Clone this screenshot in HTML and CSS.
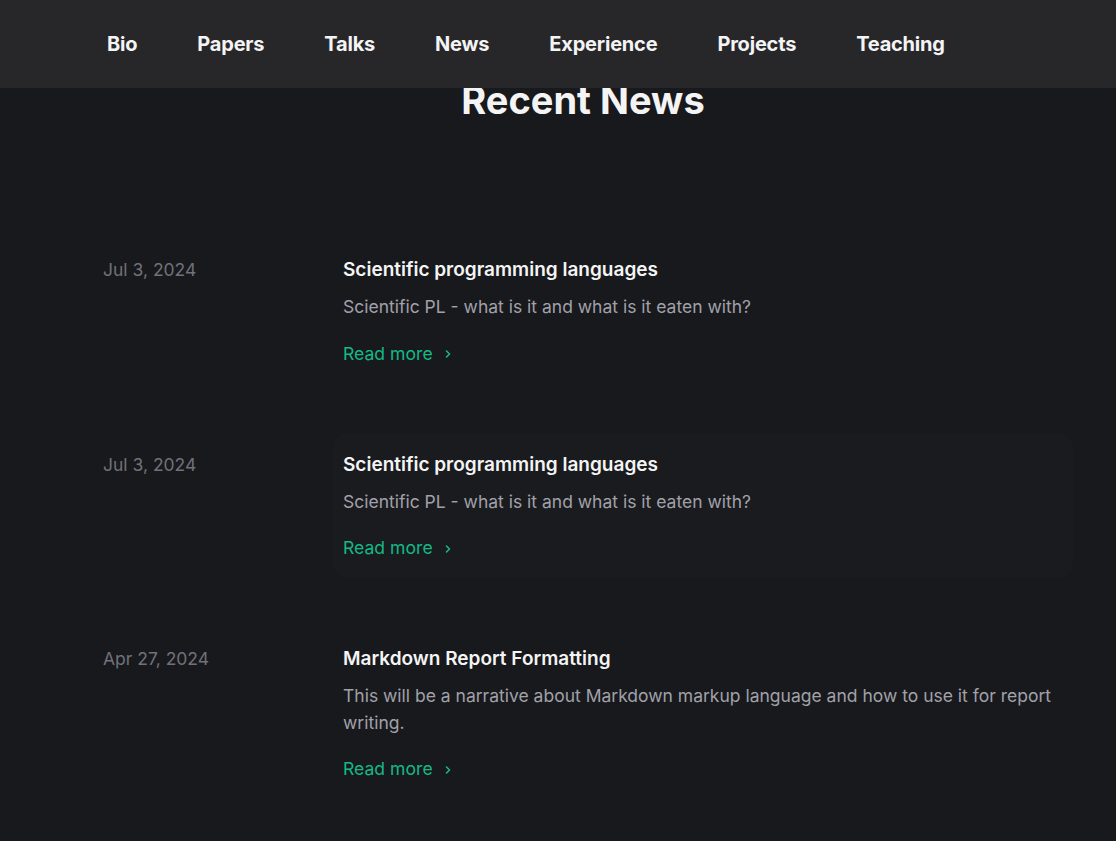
FILE: index.html
```html
<!DOCTYPE html>
<html lang="en">
<head>
<meta charset="utf-8">
<title>Recent News</title>
<link rel="stylesheet" href="styles.css">
</head>
<body>
<header class="topbar">
  <nav class="nav">
    <a class="nav-link" href="#">Bio</a>
    <a class="nav-link" href="#">Papers</a>
    <a class="nav-link" href="#">Talks</a>
    <a class="nav-link" href="#">News</a>
    <a class="nav-link" href="#">Experience</a>
    <a class="nav-link" href="#">Projects</a>
    <a class="nav-link" href="#">Teaching</a>
  </nav>
</header>
<main class="page">
  <h1 class="page-title">Recent News</h1>
  <section class="news-list">
    <article class="news-item">
      <time class="news-date">Jul 3, 2024</time>
      <div class="news-card">
        <h2 class="news-title">Scientific programming languages</h2>
        <p class="news-desc">Scientific PL - what is it and what is it eaten with?</p>
        <a class="read-more" href="#">Read more <svg class="chev" width="8" height="10" viewBox="0 0 8 10"><path d="M2.5 2 L5.5 5 L2.5 8" fill="none" stroke="currentColor" stroke-width="1.6" stroke-linecap="round" stroke-linejoin="round"/></svg></a>
      </div>
    </article>
    <article class="news-item">
      <time class="news-date">Jul 3, 2024</time>
      <div class="news-card news-card-hover">
        <h2 class="news-title">Scientific programming languages</h2>
        <p class="news-desc">Scientific PL - what is it and what is it eaten with?</p>
        <a class="read-more" href="#">Read more <svg class="chev" width="8" height="10" viewBox="0 0 8 10"><path d="M2.5 2 L5.5 5 L2.5 8" fill="none" stroke="currentColor" stroke-width="1.6" stroke-linecap="round" stroke-linejoin="round"/></svg></a>
      </div>
    </article>
    <article class="news-item">
      <time class="news-date">Apr 27, 2024</time>
      <div class="news-card">
        <h2 class="news-title">Markdown Report Formatting</h2>
        <p class="news-desc">This will be a narrative about Markdown markup language and how to use it for report writing.</p>
        <a class="read-more" href="#">Read more <svg class="chev" width="8" height="10" viewBox="0 0 8 10"><path d="M2.5 2 L5.5 5 L2.5 8" fill="none" stroke="currentColor" stroke-width="1.6" stroke-linecap="round" stroke-linejoin="round"/></svg></a>
      </div>
    </article>
  </section>
</main>
</body>
</html>
```
FILE: styles.css
```css
* { box-sizing: border-box; }
html, body { margin: 0; padding: 0; }
body {
  background: #18191c;
  font-family: Inter, "Noto Sans", sans-serif;
  color: #f4f4f5;
  overflow: hidden;
}
.topbar {
  position: fixed;
  top: 0; left: 0; right: 0;
  height: 88px;
  background: #27272a;
  z-index: 10;
}
.nav {
  display: flex;
  align-items: center;
  gap: 60px;
  height: 100%;
  padding-left: 107px;
}
.nav-link {
  color: #f4f4f5;
  text-decoration: none;
  font-weight: 700;
  font-size: 20px;
  letter-spacing: -0.2px;
}
.page {
  width: 960px;
  margin-left: 103px;
  padding-top: 80px;
}
.page-title {
  margin: 0;
  text-align: center;
  font-size: 38px;
  line-height: 40px;
  font-weight: 700;
  color: #f4f4f5;
}
.news-list {
  margin-top: 118px;
  display: flex;
  flex-direction: column;
  gap: 49px;
}
.news-item {
  display: grid;
  grid-template-columns: 230px 1fr;
  align-items: start;
}
.news-date {
  padding-top: 18px;
  font-size: 17.5px;
  line-height: 28px;
  color: #71717a;
}
.news-card {
  padding: 18px 10px;
  margin-right: -10px;
  border-radius: 14px;
}
.news-card-hover {
  background: #1a1b1e;
}
.news-title {
  margin: 0;
  font-size: 19px;
  line-height: 28px;
  font-weight: 600;
  color: #f4f4f5;
}
.news-desc {
  margin: 10px 0 0;
  font-size: 17.5px;
  line-height: 26.5px;
  color: #a1a1aa;
}
.read-more {
  display: inline-flex;
  align-items: center;
  gap: 11px;
  margin-top: 21px;
  font-size: 17.6px;
  line-height: 24px;
  color: #14b886;
  text-decoration: none;
}
.chev { display: block; margin-top: 1px; }
```
